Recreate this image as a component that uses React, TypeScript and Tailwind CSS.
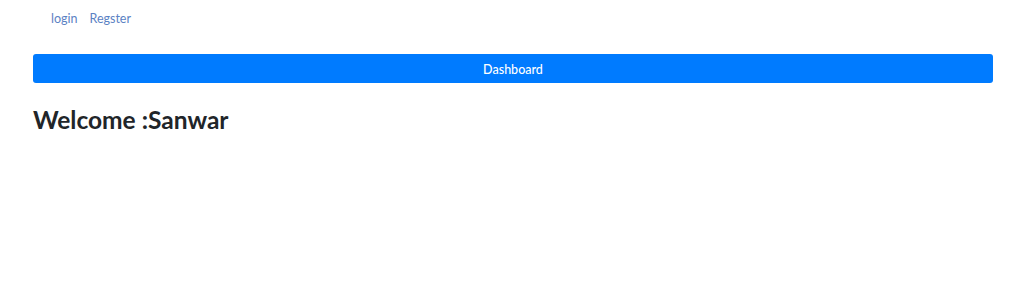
export default function App() {
  return (
    <div className="min-h-[284px] bg-white font-['Lato','Noto_Sans',sans-serif] text-[#212529]">
      {/* Nav */}
      <nav className="flex h-[38px] items-center gap-[12px] pl-[51px] text-[12.5px] text-[#5b82c4]">
        <a href="#">login</a>
        <a href="#">Regster</a>
      </nav>

      <div className="ml-[33px] w-[960px] pt-[16px]">
        <button className="flex h-[29px] w-full items-center justify-center rounded-[3px] bg-[#007bff] pt-[3px] text-[12.5px] font-medium text-white">
          Dashboard
        </button>
        <h2 className="mt-[21px] text-[24.5px] font-bold leading-[32px] text-[#212529]">
          Welcome :Sanwar
        </h2>
      </div>
    </div>
  );
}
